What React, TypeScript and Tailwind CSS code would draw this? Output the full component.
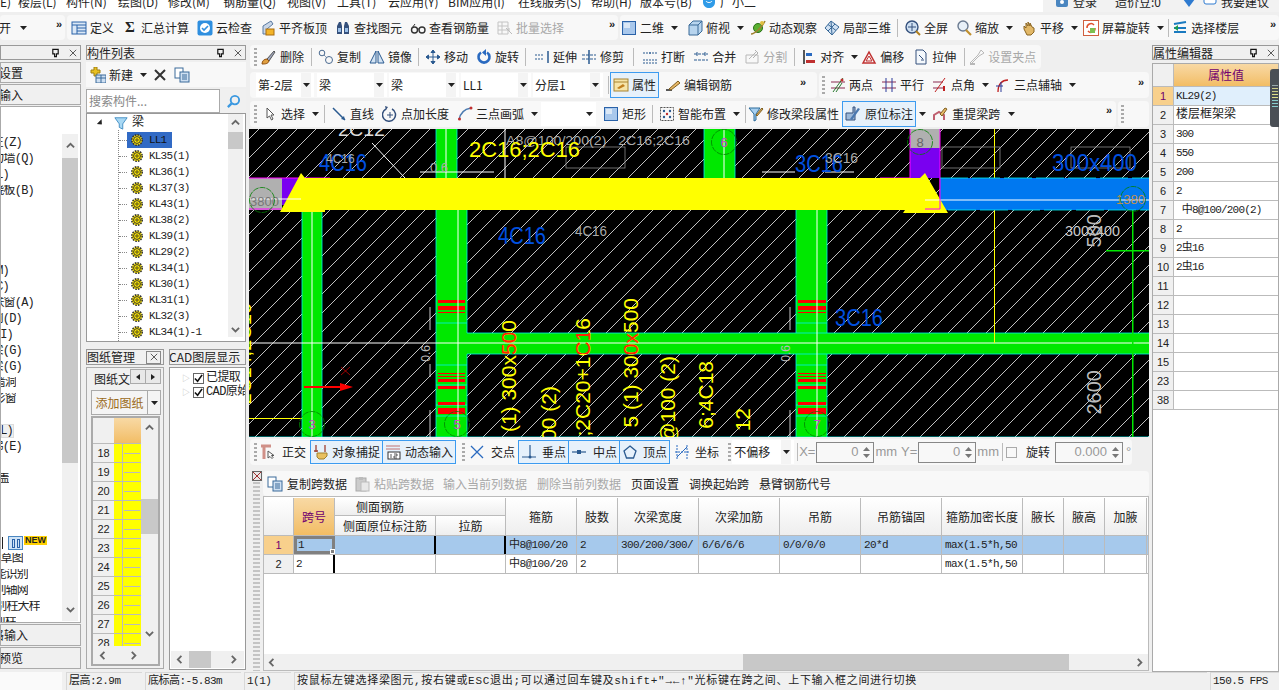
import React from "react";

const SANS = "font-['Noto_Sans_CJK_SC','Liberation_Sans',sans-serif]";
const MONO = "font-['Liberation_Mono','Noto_Sans_CJK_SC',monospace]";

const Ic = ({ children, w = 16 }: { children: React.ReactNode; w?: number }) => (
  <svg viewBox="0 0 16 16" width={w} height={w} className="shrink-0" fill="none">{children}</svg>
);
const Caret = ({ className = "" }: { className?: string }) => (
  <svg viewBox="0 0 7 4" width="7" height="4" className={"shrink-0 " + className}><path d="M0 0h7L3.5 4z" fill="#222" /></svg>
);
const More = ({ className = "" }: { className?: string }) => (
  <span className={"text-[11px] leading-none font-bold text-[#222] font-['Liberation_Sans',sans-serif] " + className}>»</span>
);
const Grip = ({ className = "" }: { className?: string }) => (
  <span className={"w-[3px] h-[18px] shrink-0 bg-[repeating-linear-gradient(to_bottom,#aaa_0,#aaa_2px,transparent_2px,transparent_4px)] " + className} />
);
const Sep = ({ className = "" }: { className?: string }) => <span className={"w-px h-[18px] bg-[#bbb] shrink-0 " + className} />;

const T = ({ icon, label, gray, caret, active, className = "" }: { icon?: React.ReactNode; label?: string; gray?: boolean; caret?: boolean; active?: boolean; className?: string }) => (
  <div className={"flex items-center gap-[3px] whitespace-nowrap shrink-0 h-full " + (gray ? "text-[#a8a8a8] " : "text-[#222] ") + (active ? "border border-[#3c9bf0] bg-[#e6f1fb] px-[2px] " : "") + className}>
    {icon}
    {label && <span className="leading-none">{label}</span>}
    {caret && <Caret className="ml-[4px]" />}
  </div>
);

const I = {
  def: <Ic><rect x="1" y="2" width="14" height="12" fill="#dbe8f6" stroke="#2a62a8" /><path d="M1 5h14M6 5v9M6 8h9M6 11h9" stroke="#2a62a8" /></Ic>,
  sigma: <span className="w-[16px] text-center font-bold text-[15px] leading-none font-['Liberation_Serif',serif]">Σ</span>,
  cloud: <Ic><rect x="0.5" y="0.5" width="15" height="15" rx="2" fill="#2f8fdf" /><circle cx="8" cy="8" r="5" fill="#fff" /><path d="M5 8l2 2 4-4" stroke="#2f8fdf" strokeWidth="1.6" /></Ic>,
  flat: <Ic><path d="M3 14V6l8-5 2 3-6 5v5z" fill="#c9d6e8" stroke="#5a7aa0" /><rect x="6" y="9" width="8" height="6" fill="#f3b428" stroke="#a86c10" /></Ic>,
  binoc: <Ic><path d="M2 14V6l2-4h2l1 4v8zM9 14V6l1-4h2l2 4v8z" fill="#35507c" /><rect x="3" y="8" width="3" height="4" fill="#9cc0e8" /><rect x="10" y="8" width="3" height="4" fill="#9cc0e8" /></Ic>,
  glasses: <Ic><circle cx="4.5" cy="10" r="3" stroke="#333" strokeWidth="1.4" /><circle cx="12" cy="10" r="3" stroke="#333" strokeWidth="1.4" /><path d="M7 9l2 0M2 8l3-4" stroke="#333" /></Ic>,
  batch: <Ic><path d="M1 2h10v12H1zM1 6h10M1 10h10M5 2v12" stroke="#c4c4c4" /><path d="M9 8l6 6M12 8v3" stroke="#bbb" /></Ic>,
  rect: <Ic><rect x="1.5" y="1.5" width="13" height="13" fill="#a9c8ec" stroke="#2a62a8" /><rect x="3" y="3" width="6" height="5" fill="#dbe8f6" /></Ic>,
  cube: <Ic><path d="M2 5l4-4h9v10l-4 4H2z" fill="#b7d4ee" stroke="#3a6a98" /><path d="M2 5h9v10M11 5l4-4" stroke="#3a6a98" /></Ic>,
  orbit: <Ic><circle cx="8" cy="8" r="4.5" fill="#5ab030" stroke="#2a7018" /><path d="M1 14c4 0 11-7 14-13" stroke="#a08030" strokeWidth="1.6" /><circle cx="12" cy="3" r="2" fill="#e0c040" /></Ic>,
  wire: <Ic><path d="M1 8l6-7 8 6-7 8z" fill="#cfe0f2" stroke="#3a6a98" /><path d="M4 4.5l8 6M7 1l1 14M11 4L4 11" stroke="#3a6a98" /></Ic>,
  full: <Ic><circle cx="7" cy="7" r="6" fill="#cfe0f2" stroke="#34507c" strokeWidth="1.4" /><path d="M7 3v8M3 7h8" stroke="#34507c" /><path d="M11 11l4 4" stroke="#b08020" strokeWidth="2" /></Ic>,
  mag: <Ic><circle cx="7" cy="6" r="5" fill="#e8f0f8" stroke="#6a7a90" strokeWidth="1.4" /><path d="M10 10l5 5" stroke="#c09030" strokeWidth="2.2" /></Ic>,
  hand: <Ic><path d="M3 9V6l2 2V3l2 3V2l2 4V3l2 4 2 1v4l-3 3H6z" fill="#e2b868" stroke="#8a6420" /></Ic>,
  rot: <Ic><rect x="0.5" y="0.5" width="15" height="15" fill="#fff" stroke="#d06040" /><path d="M4 8a4 4 0 017-3M12 8a4 4 0 01-7 3" stroke="#e0502c" strokeWidth="1.5" /><rect x="7" y="8" width="5" height="5" fill="#7cc050" /></Ic>,
  layers: <Ic><path d="M2 4l12-2M2 8h12M2 12h12" stroke="#1a7ac0" strokeWidth="2" /><path d="M2 8l4-3v6z" fill="#1a9a50" /></Ic>,
  brush: <Ic><path d="M7 10l7-8 1 1-6 9z" fill="#a0a8c0" stroke="#555" /><path d="M2 15c0-3 2-5 5-5l2 2c-1 3-4 3-7 3z" fill="#e0a040" stroke="#905010" /></Ic>,
  copy: <Ic><circle cx="4" cy="4" r="2.8" stroke="#4a6a90" /><circle cx="11" cy="11" r="3.5" stroke="#4a6a90" /><path d="M6 6l3 3" stroke="#4a6a90" strokeDasharray="1 1" /></Ic>,
  mirror: <Ic><path d="M7 2L1 14h6zM9 2l6 12H9z" fill="#d4e4f4" stroke="#2a5a90" /></Ic>,
  move: <Ic><path d="M8 1v14M1 8h14M8 1L6 3.5h4zM8 15l-2-2.500h4zM1 8l2.500-2v4zM15 8l-2.500-2v4z" fill="#2a5a90" stroke="#2a5a90" /></Ic>,
  rotate: <Ic><path d="M11 3.500A5.500 5.500 0 1 1 5 3.500" stroke="#2a6ac0" strokeWidth="2.600" /><path d="M9 0v7l4-3.500z" fill="#2a6ac0" transform="rotate(180 9.500 3.500)" /></Ic>,
  extend: <Ic><path d="M1 6h9M1 10h9" stroke="#2a5a90" strokeDasharray="2 1" /><path d="M14 2v12" stroke="#2a5a90" strokeWidth="1.500" /></Ic>,
  trim: <Ic><path d="M1 6h14M1 10h14" stroke="#2a5a90" strokeDasharray="3 1" /><path d="M8 1v14" stroke="#2a5a90" strokeWidth="1.500" /></Ic>,
  brk: <Ic><path d="M1 4h5M10 4h5M1 11h14M1 14h14" stroke="#2a5a90" strokeDasharray="2 1" /><circle cx="8" cy="4" r="1" fill="#2a5a90" /></Ic>,
  merge: <Ic><path d="M1 5h14M1 11h14" stroke="#2a5a90" strokeDasharray="3 1" /><path d="M4 3v4M12 3v4" stroke="#2a5a90" /></Ic>,
  split: <Ic><path d="M2 14V6h12v8zM5 10l8-8" stroke="#b8b8b8" /><path d="M11 1l3 3-5 5" stroke="#b0b0b0" /></Ic>,
  align: <Ic><path d="M3 1v14" stroke="#222" strokeWidth="1.500" /><path d="M5 11h9v3H5z" fill="#c03030" /><path d="M5 4h6v3H5z" fill="#2a6ac0" /></Ic>,
  offset: <Ic><path d="M2 14L8 3l6 11z" stroke="#c03030" strokeWidth="1.500" /><path d="M5 12l3-5 3 5z" stroke="#c03030" /></Ic>,
  stretch: <Ic><path d="M3 1h7l3 3v11H3z" stroke="#34507c" fill="#f4f8fc" /><path d="M6 6l4 4M8 11h3" stroke="#34507c" /></Ic>,
  grips: <Ic><path d="M1 14l8-8 3-5 3 3-5 3-8 8" stroke="#b8b8b8" /><path d="M1 15h5" stroke="#b8b8b8" strokeWidth="2" /></Ic>,
  attr: <Ic><rect x="1" y="2" width="14" height="12" fill="#f6e4a8" stroke="#a88430" /><path d="M1 5h14" stroke="#a88430" /><path d="M4 11l6-4 2 2-6 3z" fill="#c08020" /></Ic>,
  pen: <Ic><path d="M1 13h6" stroke="#222" strokeWidth="1.500" /><path d="M4 12l9-8 2 2-9 7z" fill="#e8b868" stroke="#806020" /></Ic>,
  two: <Ic><path d="M1 5h14M1 11h14" stroke="#8a2a50" /><path d="M3 15L13 1M6 15L12 6" stroke="#2a7a30" /><circle cx="12" cy="3" r="1.500" fill="#c03030" /></Ic>,
  par: <Ic><path d="M1 5h14M1 11h14" stroke="#8a2a50" /><path d="M5 1v14M11 1v14" stroke="#2a3a9a" /></Ic>,
  angle: <Ic><path d="M1 5h10M1 11h10" stroke="#8a2a50" /><path d="M3 15L13 1" stroke="#c02020" /><path d="M12 9v5" stroke="#c02020" strokeWidth="2" /></Ic>,
  arcAxis: <Ic><path d="M3 15c0-8 4-12 10-12" stroke="#c02020" strokeWidth="1.300" /><path d="M1 9h7M6 5v10" stroke="#2a3a9a" /></Ic>,
  cursor: <Ic><path d="M5 2v10l2.500-2 2 4 1.500-1-2-4h3z" fill="#fff" stroke="#555" /></Ic>,
  line: <Ic><path d="M2 2l12 12" stroke="#2a5a90" strokeWidth="1.500" /><path d="M14 14l-4-1 3-3z" fill="#2a5a90" /></Ic>,
  ptlen: <Ic><path d="M4 3a6.500 6.500 0 1 0 6 0" stroke="#34507c" strokeWidth="1.500" /><path d="M8 6v6M5 9h6" stroke="#34507c" /><path d="M3 0l3 1-2 3z" fill="#34507c" /></Ic>,
  arc: <Ic><path d="M2 14C3 7 8 3 14 2" stroke="#4a7ab0" strokeWidth="1.500" /><circle cx="2.500" cy="13" r="1.500" fill="#c03030" /><circle cx="14" cy="2" r="1.500" fill="#c03030" /></Ic>,
  smart: <Ic><rect x="1.500" y="1.500" width="13" height="13" stroke="#555" strokeDasharray="2 1" /><circle cx="5" cy="5" r="1.200" fill="#2a5a90" /><circle cx="11" cy="5" r="1.200" fill="#2a5a90" /><circle cx="8" cy="8" r="1.200" fill="#c03030" /><circle cx="5" cy="11" r="1.200" fill="#2a5a90" /><circle cx="11" cy="11" r="1.200" fill="#2a5a90" /></Ic>,
  filter: <Ic><path d="M1 2h11L8 8v6l-2 1V8z" fill="#a8d0f0" stroke="#2a6a9a" /><path d="M8 9l6-7 1 1-6 7z" fill="#e0b060" stroke="#806020" /></Ic>,
  mark: <Ic><path d="M1 14V7h7V1h2v13z" fill="#9cb8d8" stroke="#34507c" /><path d="M5 13l8-11 2 1-8 11z" fill="#4a78b0" /></Ic>,
  remark: <Ic><path d="M2 14V9l5-3 5 3v5" stroke="#c06070" strokeWidth="2" /><path d="M8 8l5-6 2 1-5 7z" fill="#e8b868" stroke="#806020" /></Ic>,
  ortho: <Ic><path d="M1 2h10M4 2v13" stroke="#d09088" strokeWidth="3" /><path d="M8 7v7l2-1.500 2 2 1-1-1.500-2H14z" fill="#fff" stroke="#555" /></Ic>,
  snapObj: <Ic><path d="M1 7h4M3 1v7" stroke="#a04030" strokeWidth="1.300" /><path d="M12 1v7" stroke="#a04030" strokeWidth="1.300" /><path d="M4 13V9h10v3l-3 3H6z" fill="#e8c060" stroke="#a08030" /></Ic>,
  dyn: <Ic><path d="M1 2h14M1 5h14" stroke="#c07070" /><rect x="3" y="8" width="12" height="7" fill="#fff" stroke="#333" /><path d="M6 10v4M9 10h3v2H9v2h3" stroke="#333" strokeWidth="0.800" /></Ic>,
  cross: <Ic><path d="M2 2l12 12M14 2L2 14" stroke="#2a6ac0" strokeWidth="1.300" /></Ic>,
  perp: <Ic><path d="M1 13h14M9 1v12" stroke="#2a5a90" strokeWidth="1.200" /><circle cx="9" cy="13" r="1.500" fill="#2a5a90" /></Ic>,
  mid: <Ic><path d="M1 8h14" stroke="#2a5a90" strokeWidth="1.200" /><rect x="6" y="6" width="4" height="4" fill="#2a5a90" /></Ic>,
  vert: <Ic><path d="M8 2l6 5-2.500 7h-7L2 7z" stroke="#2a5a90" strokeWidth="1.300" fill="#e6f1fb" /></Ic>,
  coord: <Ic><path d="M3 1v14M13 1v14M1 8h14" stroke="#2a6ac0" strokeDasharray="2 1" /><path d="M3 13L13 3" stroke="#2a6ac0" /></Ic>,
  tcopy: <Ic><rect x="1" y="1" width="8" height="10" fill="#fff" stroke="#3a6a9a" /><rect x="6" y="5" width="9" height="10" fill="#cfe0f2" stroke="#3a6a9a" /><path d="M8 8h5M8 10h5M8 12h5" stroke="#3a6a9a" /></Ic>,
  tpaste: <Ic><rect x="2" y="2" width="10" height="13" fill="#ccc" stroke="#aaa" /><rect x="5" y="1" width="4" height="3" fill="#bbb" /><rect x="7" y="6" width="8" height="9" fill="#e8e8e8" stroke="#bbb" /></Ic>,
  tnew: <Ic><path d="M4 0h3v3h3v3H7v3H4V6H1V3h3z" fill="#e8c020" stroke="#a08010" /><rect x="6" y="8" width="10" height="8" fill="#cfe0f2" stroke="#3a6a9a" /><path d="M6 11h10M11 8v8" stroke="#3a6a9a" /></Ic>,
};

const Gear = () => (
  <svg viewBox="0 0 12 12" width="12" height="12" className="shrink-0">
    <circle cx="6" cy="6" r="5.200" fill="#ffe800" stroke="#333" strokeWidth="1.600" strokeDasharray="1.600 1.100" />
    <circle cx="6" cy="6" r="3.400" fill="#ffe800" stroke="#333" />
    <circle cx="6" cy="6" r="1.200" fill="#ffe800" stroke="#222" strokeWidth="0.800" />
  </svg>
);

const Chev = ({ d, className = "" }: { d: "u" | "d" | "l" | "r"; className?: string }) => {
  const p = { u: "M1 6l4-4 4 4", d: "M1 2l4 4 4-4", l: "M6 1L2 5l4 4", r: "M2 1l4 4-4 4" }[d];
  return <svg viewBox="0 0 10 10" width="9" height="9" className={"shrink-0 " + className}><path d={p} fill="none" stroke="#666" strokeWidth="2" /></svg>;
};

const PanelHead = ({ title, className = "" }: { title: string; className?: string }) => (
  <div className={"h-[15px] border border-[#999] bg-[#f0f0f0] flex items-center text-[12px] leading-none text-[#222] overflow-hidden " + className}>
    <span className="grow whitespace-nowrap overflow-hidden">{title}</span>
    <svg viewBox="0 0 10 10" width="9" height="10" className="mr-[9px] shrink-0"><path d="M2 1h6v5H6v3H4V6H2z" fill="none" stroke="#111" strokeWidth="1.300" /></svg>
    <svg viewBox="0 0 10 10" width="8" height="8" className="mr-[3px] shrink-0"><path d="M1 1l8 8M9 1l-8 8" stroke="#333" /></svg>
  </div>
);

const Menu = () => {
  const items: [string, string][] = [
    ["E)", "w-[18px]"], ["楼层(L)", "w-[48px]"], ["构件(N)", "w-[52px]"], ["绘图(D)", "w-[50px]"], ["修改(M)", "w-[55px]"], ["钢筋量(Q)", "w-[64px]"], ["视图(V)", "w-[50px]"], ["工具(T)", "w-[51px]"], ["云应用(Y)", "w-[60px]"], ["BIM应用(I)", "w-[70px]"], ["在线服务(S)", "w-[73px]"], ["帮助(H)", "w-[49px]"], ["版本号(B)", "w-[62px]"],
  ];
  return (
    <div className="h-[12px] overflow-hidden flex text-[12px] leading-none text-[#222] bg-white">
      <div className="flex -mt-[4px] grow">
        {items.map(([t, w]) => <span key={t} className={"whitespace-nowrap shrink-0 " + w}>{t}</span>)}
        <svg viewBox="0 0 14 14" width="14" height="14" className="shrink-0 mt-[-1px]"><path d="M1 0h12v7c0 4-3 6-6 6s-6-2-6-6z" fill="#2f9be8" /><path d="M4 6c1 2 5 2 6 0" stroke="#fff" fill="none" /></svg>
        <span className="ml-[4px] whitespace-nowrap">广小二</span>
      </div>
      <div className="w-[236px] h-full bg-[#f2f2f2] flex relative overflow-hidden shrink-0">
        <div className="flex items-start -mt-[4px] pl-[12px]">
          <svg viewBox="0 0 14 14" width="14" height="14" className="mr-[4px] -mt-[1px] shrink-0"><rect x="1" y="0" width="12" height="12" rx="2" fill="#4a86c0" /><circle cx="7" cy="7" r="2" fill="#fff" /></svg>
          <span className="whitespace-nowrap">登录</span>
          <span className="ml-[18px] whitespace-nowrap">造价豆:0</span>
          <svg viewBox="0 0 12 8" width="12" height="8" className="ml-[22px] mt-[3px] shrink-0"><path d="M0 0h12L6 8z" fill="#2f7bd0" /></svg>
          <svg viewBox="0 0 14 14" width="14" height="14" className="ml-[8px] -mt-[1px] shrink-0"><rect x="1" y="0" width="12" height="9" rx="2" fill="#fff" stroke="#2f7bd0" /></svg>
          <span className="ml-[4px] whitespace-nowrap">我要建议</span>
        </div>
      </div>
    </div>
  );
};

const Row1 = () => (
  <div className="mt-[3px] h-[25px] flex gap-[2px] text-[12px]">
    <div className="w-[65px] bg-[#f8f8f8] rounded-sm flex items-center relative overflow-hidden">
      <span className="-ml-[13px] text-[#222] whitespace-nowrap">打开</span><Caret className="ml-[9px]" /><More className="absolute right-[3px] top-[4px]" />
    </div>
    <div className="w-[551px] bg-[#f8f8f8] rounded-sm flex items-center pl-[4px] gap-[8px] relative">
      <T icon={I.def} label="定义" /><T icon={I.sigma} label="汇总计算" /><T icon={I.cloud} label="云检查" /><T icon={I.flat} label="平齐板顶" /><T icon={I.binoc} label="查找图元" /><T icon={I.glasses} label="查看钢筋量" /><T icon={I.batch} label="批量选择" gray />
      <More className="absolute right-[3px] top-[4px]" />
    </div>
    <div className="grow bg-[#f8f8f8] rounded-sm flex items-center pl-[1px] relative">
      <T icon={I.rect} label="二维" caret /><T icon={I.cube} label="俯视" caret className="ml-[9px]" /><T icon={I.orbit} label="动态观察" className="ml-[6px]" /><T icon={I.wire} label="局部三维" className="ml-[7px]" />
      <Sep className="ml-[6px]" /><T icon={I.full} label="全屏" className="ml-[7px]" /><T icon={I.mag} label="缩放" caret className="ml-[8px]" /><T icon={I.hand} label="平移" caret className="ml-[8px]" /><T icon={I.rot} label="屏幕旋转" caret className="ml-[5px]" />
      <Sep className="ml-[4px]" /><T icon={I.layers} label="选择楼层" className="ml-[3px]" />
      <More className="absolute right-[3px] top-[4px]" />
    </div>
  </div>
);

const leftRows: [string, string][] = [
  ["柱(Z)", "w-[21px]"], ["剪力墙(Q)", "w-[33px]"], ["梁(L)", "w-[8px]"], ["现浇板(B)", "w-[33px]"], ["", ""], ["", ""], ["", ""], ["", ""],
  ["门(M)", "w-[8px]"], ["窗(C)", "w-[8px]"], ["门联窗(A)", "w-[33px]"], ["墙洞(D)", "w-[21px]"], ["壁龛(I)", "w-[12px]"], ["连梁(G)", "w-[21px]"], ["圈梁(G)", "w-[21px]"], ["墙洞", "w-[15px]"], ["带形窗", "w-[15px]"],
  ["", ""], ["(L)", "w-[13px]"], ["楼梯(E)", "w-[21px]"], ["", ""], ["顶盖", "w-[8px]"], ["", ""], ["", ""], ["", ""], ["NEW", ""], ["绘草图", "w-[22px]"], ["智能识别", "w-[27px]"], ["识别轴网", "w-[27px]"], ["识别柱大样", "w-[39px]"], ["识别柱", "w-[15px]"],
];

const LeftPanel = () => (
  <div className="w-[81px] shrink-0 flex flex-col text-[12px] text-[#222]">
    <PanelHead title="" />
    <div className="mt-[2px] h-[21px] border border-[#aaa] bg-[#f0f0f0] flex items-center overflow-hidden"><span className="-ml-[26px] whitespace-nowrap leading-none">计算设置</span></div>
    <div className="mt-[1px] h-[21px] border border-[#aaa] bg-[#f0f0f0] flex items-center overflow-hidden"><span className="-ml-[26px] whitespace-nowrap leading-none">绘图输入</span></div>
    <div className="mt-[1px] h-[517px] border border-[#aaa] bg-white flex relative overflow-hidden">
      <div className="grow overflow-hidden pt-[28px]">
        {leftRows.map(([t, w], i) => (
          <div key={i} className={"h-[16px] flex items-center whitespace-nowrap leading-none tracking-[-0.8px] " + MONO}>
            {t === "NEW" ? (
              <>
                <span className="ml-[1px] mr-[5px] w-px h-[12px] bg-[#222]" />
                <span className="w-[15px] h-[14px] border border-[#4a86c0] bg-[#cfe3f6] flex items-center justify-center gap-[2px] shrink-0"><i className="w-[3px] h-[9px] border border-[#2a62a8]" /><i className="w-[3px] h-[9px] border border-[#2a62a8]" /></span>
                <span className="ml-[1px] -mt-[6px] text-[9px] tracking-normal font-bold text-[#222] bg-[#ffd000] px-[1px] font-['Liberation_Sans',sans-serif]">NEW</span>
              </>
            ) : t === "(L)" ? (
              <span className={"h-[14px] bg-[#f0f0f0] border border-[#ddd] flex justify-end items-center overflow-hidden " + w}><span>L)</span></span>
            ) : (
              <span className={"flex justify-end overflow-hidden " + w}><span className="shrink-0">{t}</span></span>
            )}
          </div>
        ))}
      </div>
      <div className="absolute right-[2px] top-[27px] bottom-[1px] w-[16px] bg-[#f0f0f0] flex flex-col">
        <div className="h-[24px] flex justify-center items-center"><Chev d="u" /></div>
        <div className="h-[305px] bg-[#c8c8c8]" />
        <div className="grow flex justify-center items-end pb-[6px]"><Chev d="d" /></div>
      </div>
    </div>
    <div className="mt-[1px] h-[22px] border border-[#aaa] bg-[#f0f0f0] flex items-center overflow-hidden"><span className="-ml-[21px] whitespace-nowrap leading-none">表格输入</span></div>
    <div className="mt-[1px] h-[22px] border border-[#aaa] bg-[#f0f0f0] flex items-center overflow-hidden"><span className="-ml-[26px] whitespace-nowrap leading-none">报表预览</span></div>
  </div>
);

const treeItems = ["LL1", "KL35(1)", "KL36(1)", "KL37(3)", "KL43(1)", "KL38(2)", "KL39(1)", "KL29(2)", "KL34(1)", "KL30(1)", "KL31(1)", "KL32(3)", "KL34(1)-1"];
const nums = ["18", "19", "20", "21", "22", "23", "24", "25", "26", "27", "28"];

const Col2 = () => (
  <div className="w-[161px] shrink-0 flex flex-col text-[12px] text-[#222]">
    <PanelHead title="构件列表" className="ml-[1px]" />
    <div className="ml-[1px] mt-[2px] h-[25px] bg-[#f8f8f8] flex items-center pl-[4px]">
      <T icon={I.tnew} label="新建" caret />
      <svg viewBox="0 0 14 14" width="14" height="14" className="ml-[6px] shrink-0"><path d="M2 2l10 10M12 2L2 12" stroke="#333" strokeWidth="2" /></svg>
      <span className="ml-[7px]">{I.tcopy}</span>
    </div>
    <div className="ml-[1px] mt-[2px] h-[24px] flex bg-[#f0f0f0]">
      <div className="w-[134px] border border-[#aaa] bg-white flex items-center pl-[2px] text-[#888] leading-none">搜索构件...</div>
      <div className="grow flex items-center justify-center"><svg viewBox="0 0 16 16" width="15" height="15"><circle cx="9.500" cy="6.500" r="4.500" fill="none" stroke="#3a98e0" strokeWidth="2" /><path d="M6 10l-4 4" stroke="#3a98e0" strokeWidth="2.500" /></svg></div>
    </div>
    <div className={"ml-[1px] h-[229px] border border-[#999] bg-white relative overflow-hidden " + MONO}>
      <div className="h-[18px] flex items-center pl-[10px]">
        <Caret className="rotate-[-45deg]" />
        <span className="ml-[10px]">
          <svg viewBox="0 0 16 16" width="14" height="14"><path d="M1 2h14L10 9v6l-4-2V9z" fill="#a8d8f4" stroke="#3a88c0" /></svg>
        </span>
        <span className="ml-[4px] text-[12px] leading-none">梁</span>
      </div>
      <div className="absolute left-[31px] top-[16px] bottom-0 border-l border-dotted border-[#888]" />
      {treeItems.map((t, i) => (
        <div key={t + i} className="h-[16px] flex items-center pl-[32px]">
          <span className="w-[8px] border-t border-dotted border-[#888] shrink-0" />
          <span className={"flex items-center gap-[3px] h-[16px] pl-[4px] pr-[6px] " + (i === 0 ? "bg-[#316ac5]" : "")}>
            <Gear />
            <span className={"ml-[3px] text-[11px] tracking-[-0.8px] leading-none " + (i === 0 ? "text-[#111]" : "text-[#222]")}>{t}</span>
          </span>
        </div>
      ))}
      <div className="absolute right-[2px] top-0 bottom-[4px] w-[15px] bg-[#f0f0f0] flex flex-col items-center">
        <div className="h-[18px] flex items-center"><Chev d="u" /></div>
        <div className="w-full h-[17px] bg-[#c8c8c8]" />
        <div className="grow flex items-end pb-[2px]"><Chev d="d" /></div>
      </div>
    </div>
    <div className="mt-[7px] flex gap-[5px] ml-[1px]">
      <div className="w-[78px] flex flex-col">
        <div className="h-[16px] border border-[#999] bg-[#f0f0f0] flex items-center justify-between overflow-hidden leading-none">
          <span className="whitespace-nowrap">图纸管理</span>
          <span className="mr-[2px] w-[15px] h-[13px] border border-[#888] flex items-center justify-center"><svg viewBox="0 0 10 10" width="8" height="8"><path d="M1 1l8 8M9 1l-8 8" stroke="#333" /></svg></span>
        </div>
        <div className="mt-[2px] h-[302px] border border-[#aaa] bg-[#f0f0f0] flex flex-col px-[4px]">
          <div className="h-[22px] flex items-center relative">
            <span className="ml-[3px] leading-none whitespace-nowrap">图纸文</span>
            <div className="absolute right-[-2px] top-[1px] flex border border-[#aaa] bg-[#e8e8e8] h-[15px] w-[31px]">
              <span className="w-1/2 border-r border-[#aaa] flex items-center justify-center"><i className="border-y-[3px] border-r-[4px] border-y-transparent border-r-[#222]" /></span>
              <span className="w-1/2 flex items-center justify-center"><i className="border-y-[3px] border-l-[4px] border-y-transparent border-l-[#222]" /></span>
            </div>
          </div>
          <div className="h-[25px] w-[70px] border border-[#aaa] bg-[#f4f4f4] flex items-center shrink-0">
            <span className="grow text-center text-[12px] leading-none text-[#9a6a20]">添加图纸</span>
            <span className="w-[13px] h-full border-l border-[#aaa] flex items-center justify-center"><Caret /></span>
          </div>
          <div className="mt-[1px] h-[250px] w-[69px] border-2 border-[#aaa] bg-[#f0f0f0] overflow-hidden flex flex-col">
            <div className="flex h-[202px] overflow-hidden grow">
              <div className="w-[48px] shrink-0">
                <div className="flex h-[26px] border-b border-[#bbb]">
                  <div className="w-[21px] bg-[#f0f0f0]" />
                  <div className="grow bg-gradient-to-b from-[#f8d9a4] to-[#f2bd64]" />
                </div>
                {nums.map((n) => (
                  <div key={n} className="flex h-[19px] border-b border-[#bbb]">
                    <div className="w-[21px] bg-[#f0f0f0] flex items-center justify-center text-[11px] leading-none font-['Liberation_Sans',sans-serif]">{n}</div>
                    <div className="w-[9px] bg-[#ffff00] border-r border-[#bbb]" />
                    <div className="grow bg-[#ffff00] flex items-center"><span className="w-full mx-[1px] h-px bg-[#bbb]" /></div>
                  </div>
                ))}
              </div>
              <div className="grow flex flex-col items-center pt-[6px]">
                <Chev d="u" />
                <div className="mt-[66px] w-full h-[35px] bg-[#c8c8c8]" />
                <div className="mt-[96px]"><Chev d="d" /></div>
              </div>
            </div>
            <div className="h-[18px] flex items-center px-[6px] gap-[22px] shrink-0"><Chev d="l" /><Chev d="r" /></div>
          </div>
        </div>
      </div>
      <div className="w-[77px] flex flex-col">
        <div className="h-[16px] border border-[#999] bg-[#f0f0f0] flex items-center overflow-hidden leading-none"><span className="whitespace-nowrap -ml-[1px] text-[12px]">CAD图层显示</span></div>
        <div className="mt-[2px] h-[303px] border border-[#999] bg-white flex flex-col overflow-hidden">
          <div className="pl-[12px] pt-[3px] grow">
            {["已提取", "CAD原始"].map((t) => (
              <div key={t} className="h-[14px] flex items-center whitespace-nowrap leading-none">
                <span className="text-[#bbb] text-[8px] mr-[3px]">▷</span>
                <span className="w-[11px] h-[11px] border border-[#666] bg-white flex items-center justify-center mr-[2px] shrink-0"><svg viewBox="0 0 10 10" width="9" height="9"><path d="M1 5l3 3 5-7" fill="none" stroke="#111" strokeWidth="1.800" /></svg></span>
                <span className={MONO + " text-[12px] tracking-[-0.6px]"}>{t}</span>
              </div>
            ))}
          </div>
          <div className="h-[17px] bg-[#f0f0f0] mx-[1px] mb-[1px] flex items-center px-[5px]"><Chev d="l" /><div className="ml-[4px] w-[22px] h-full bg-[#c8c8c8]" /><Chev d="r" className="ml-auto" /></div>
        </div>
      </div>
    </div>
  </div>
);

const Row2 = () => (
  <div className="h-[24px] w-[791px] ml-[1px] bg-[#f8f8f8] flex items-center pl-[4px] text-[12px] rounded-sm">
    <Grip />
    <T icon={I.brush} label="删除" className="ml-[3px] gap-[4px]" /><Sep className="ml-[7px]" />
    <T icon={I.copy} label="复制" className="ml-[6px]" />
    <T icon={I.mirror} label="镜像" className="ml-[8px]" /><Sep className="ml-[6px]" />
    <T icon={I.move} label="移动" className="ml-[6px]" />
    <T icon={I.rotate} label="旋转" className="ml-[8px] gap-[3px]" /><Sep className="ml-[6px]" />
    <T icon={I.extend} label="延伸" className="ml-[8px]" />
    <T icon={I.trim} label="修剪" className="ml-[4px]" /><Sep className="ml-[9px]" />
    <T icon={I.brk} label="打断" className="ml-[8px]" />
    <T icon={I.merge} label="合并" className="ml-[8px]" />
    <T icon={I.split} label="分割" gray className="ml-[8px]" /><Sep className="ml-[7px]" />
    <T icon={I.align} label="对齐" caret className="ml-[6px] !gap-[3px]" />
    <T icon={I.offset} label="偏移" className="ml-[3px]" />
    <T icon={I.stretch} label="拉伸" className="ml-[9px]" /><Sep className="ml-[8px]" />
    <T icon={I.grips} label="设置夹点" gray className="ml-[4px]" />
  </div>
);

const Sel = ({ t, w }: { t: string; w: string }) => (
  <div className={"h-[24px] bg-white flex items-center justify-between pl-[2px] pr-[3px] shrink-0 " + w}>
    <span className="leading-none whitespace-nowrap">{t}</span>
    <span className="w-[10px] h-full bg-[#f4f4f4] flex items-center justify-center"><Caret /></span>
  </div>
);

const Row3 = () => (
  <div className="mt-[3px] h-[26px] flex gap-[2px] text-[12px] text-[#222] ml-[1px]">
    <div className="w-[567px] bg-[#f8f8f8] rounded-sm flex items-center pl-[6px] relative">
      <Sel t="第-2层" w="w-[58px]" /><Sel t="梁" w="w-[70px] ml-[3px]" /><Sel t="梁" w="w-[70px] ml-[2px]" /><Sel t="LL1" w="w-[70px] ml-[2px]" /><Sel t="分层1" w="w-[70px] ml-[2px]" />
      <Sep className="ml-[5px]" />
      <T icon={I.attr} label="属性" active className="ml-[1px] !h-[26px]" />
      <T icon={I.pen} label="编辑钢筋" className="ml-[6px]" />
      <More className="absolute right-[11px] top-[5px]" />
    </div>
    <div className="grow bg-[#f8f8f8] rounded-sm flex items-center pl-[3px] relative">
      <Grip />
      <T icon={I.two} label="两点" className="ml-[5px]" />
      <T icon={I.par} label="平行" className="ml-[8px]" />
      <T icon={I.angle} label="点角" caret className="ml-[8px]" />
      <T icon={I.arcAxis} label="三点辅轴" caret className="ml-[6px]" />
      <More className="absolute right-[5px] top-[5px]" />
    </div>
  </div>
);

const Row4 = () => (
  <div className="mt-[3px] h-[26px] flex gap-[2px] text-[12px] text-[#222] ml-[1px]">
    <div className="w-[866px] bg-[#f8f8f8] rounded-sm flex items-center pl-[4px] relative">
      <Grip />
      <T icon={I.cursor} label="选择" caret className="ml-[5px] gap-[1px]" /><Sep className="ml-[5px]" />
      <T icon={I.line} label="直线" className="ml-[6px]" />
      <T icon={I.ptlen} label="点加长度" className="ml-[8px] gap-[1px]" />
      <T icon={I.arc} label="三点画弧" caret className="ml-[8px]" />
      <span className="ml-[3px] w-[55px] h-[24px] bg-white flex items-center justify-end pr-[3px]"><Caret /></span>
      <T icon={I.rect} label="矩形" className="ml-[7px]" /><Sep className="ml-[6px]" />
      <T icon={I.smart} label="智能布置" caret className="ml-[6px] !gap-[3px]" /><Sep className="ml-[5px]" />
      <T icon={I.filter} label="修改梁段属性" className="ml-[2px] gap-[0px]" />
      <T icon={I.mark} label="原位标注" active className="ml-[3px] !h-[26px] gap-[4px]" />
      <Caret className="ml-[3px]" />
      <T icon={I.remark} label="重提梁跨" caret className="ml-[6px] gap-[4px]" />
      <More className="absolute right-[4px] top-[4px]" />
    </div>
    <div className="grow bg-[#f8f8f8] rounded-sm flex items-center pl-[3px]"><Grip /></div>
  </div>
);

const Canvas = () => {
  const Y = "#ffff00";
  const G = "#00e800";
  const C = "#00f0f0";
  const vt = (x: number, y: number, t: string, size = 21, fill = Y, key?: string) => (
    <text key={key} x={x} y={y} transform={`rotate(-90 ${x} ${y})`} textAnchor="end" fontSize={size} fill={fill} fontFamily="'Liberation Sans',sans-serif">{t}</text>
  );
  const vtexts = (fill: string) => [
    vt(516, 320, "(1)  300x500", 21, fill, "a"), vt(556, 386, "00 (2)", 21, fill, "b"), vt(590, 318, ";2C20+1C16", 21, fill, "c"), vt(638, 298, "5 (1)  300x500", 21, fill, "d"), vt(675, 356, "@100 (2)", 21, fill, "e"), vt(713, 361, "6;4C18", 21, fill, "f"), vt(750, 408, "12", 21, fill, "g"),
  ];
  const stripes = (x: number, w: number) => [300, 306, 309, 312, 373, 376, 379, 386, 402, 408, 411].map((y, i) => <rect key={y + "s" + x + i} x={x} y={y} width={w} height={i === 2 || i === 3 || i === 4 || i === 5 ? 1 : 3} fill="#ff0000" />);
  const circle = (x: number, y: number, t: string, fill = "#d040d0", key?: string) => (
    <g key={key}>
      <circle cx={x} cy={y} r="12.500" fill="none" stroke="#008000" strokeWidth="0.800" strokeDasharray="6 1" />
      <text x={x} y={y + 5} fontSize="13" textAnchor="middle" fill={fill} fontFamily="'Liberation Sans',sans-serif">{t}</text>
    </g>
  );
  return (
    <svg viewBox="249 129 900 308" width="900" height="308" className="block mt-[2px] shrink-0 bg-black">
      <defs>
        <pattern id="hatch" patternUnits="userSpaceOnUse" width="19" height="19" x="8" y="0">
          <path d="M-1 20L20 -1" stroke="#c0c0c0" strokeWidth="1" shapeRendering="crispEdges" />
        </pattern>
        <clipPath id="beam"><rect x="467" y="333" width="682" height="21" /></clipPath>
      </defs>
      <rect x="249" y="129" width="900" height="308" fill="#000" />
      <rect x="249" y="129" width="900" height="308" fill="url(#hatch)" />

      <rect x="302" y="210" width="20" height="227" fill={G} />
      <rect x="436" y="129" width="21" height="49" fill={G} />
      <rect x="436" y="210" width="31" height="227" fill={G} />
      <rect x="704" y="129" width="31" height="49" fill={G} />
      <rect x="796" y="210" width="31" height="227" fill={G} />
      <rect x="467" y="333" width="682" height="21" fill={G} />
      <g stroke={C} strokeWidth="0.800">
        <path d="M302 210V437M322 210V437M436 129V178M457 129V178M436 210V437M467 210V333M467 354V437M704 129V178M735 129V178M796 210V333M796 354V437M827 210V333M827 354V437" fill="none" />
        <path d="M467 333H1149M467 354H1149M249 437H1149" />
        <path d="M436 323H467M436 365H467M436 385H467M436 405H467M436 416H467M796 323H827M796 365H827M796 385H827M796 405H827M796 416H827" />
      </g>
      {stripes(438, 27)}
      {stripes(798, 28)}
      <g stroke="#fff" strokeWidth="1">
        <path d="M312 210V437M446 129V178M458 210V437M724 129V178M817 210V437M249 343H1149" />
        <path d="M420 172H494M762 172H795M825 172H854M505 129V178M372 143L405 178" />
        <path d="M430 307V330M430 364V377M430 410V437M790 307V330M790 410V437" strokeWidth="0.800" />
      </g>
      <rect x="994" y="129" width="1" height="214" fill={Y} />
      <rect x="1132" y="200" width="1.500" height="237" fill="#00e800" />
      <rect x="1106" y="250" width="43" height="1.500" fill="#00e800" />
      <rect x="1106" y="200" width="43" height="1" fill="#00e800" />

      <rect x="910" y="129" width="30" height="19" fill="#b0b0b0" />
      <rect x="910" y="148" width="30" height="30" fill="#7a00f0" />
      <path d="M910 129V178H880M940 129V209H925" fill="none" stroke="#ff00ff" strokeWidth="1" />
      <rect x="249" y="178" width="33" height="32" fill="#b0b0b0" />
      <path d="M282 178H300L284 205H282z" fill="#7a00f0" />
      <path d="M249 178H330M249 209H300" stroke="#ff00ff" strokeWidth="1" />
      <rect x="940" y="178" width="209" height="32" fill="#0078f0" />
      <path d="M940 178H1149M948 210H1149" stroke={C} strokeWidth="0.800" strokeDasharray="28 4" />

      <path d="M301 173L305 178H920L925 173L948 213H903L905 210H325L325 212H280L301 173z" fill={Y} />
      <path d="M925 200H1149" stroke="#fff" strokeWidth="1.200" />
      <path d="M249 199H301" stroke="#fff" strokeWidth="1" />
      <path d="M925 209H940V178" fill="none" stroke="#ff00ff" strokeWidth="1" />

      <g fill="none" stroke="#888" strokeWidth="0.800">
        <rect x="566" y="147" width="59" height="21" />
        <rect x="942" y="147" width="58" height="21" />
        <rect x="1071" y="147" width="59" height="21" />
      </g>

      <g fontFamily="'Liberation Sans',sans-serif">
        <text x="338" y="136" fontSize="18" fill="#ddd" textLength="47" lengthAdjust="spacingAndGlyphs">2C12</text>
        <text x="506" y="145" fontSize="13" fill="#aaa" xmlSpace="preserve" textLength="184" lengthAdjust="spacingAndGlyphs">A8@100/200(2)   2C16;2C16</text>
        <text x="469" y="157" fontSize="22" fill={Y} textLength="111" lengthAdjust="spacingAndGlyphs">2C16;2C16</text>
        <text x="319" y="171" fontSize="24" fill="#0050e0" textLength="48" lengthAdjust="spacingAndGlyphs">4C16</text>
        <text x="326" y="163" fontSize="12" fill="#aaa">4C16</text>
        <text x="430" y="172" fontSize="13" fill="#aaa">0.6</text>
        <text x="498" y="244" fontSize="24" fill="#0050e0" textLength="48" lengthAdjust="spacingAndGlyphs">4C16</text>
        <text x="575" y="236" fontSize="14" fill="#aaa" textLength="32" lengthAdjust="spacingAndGlyphs">4C16</text>
        <text x="795" y="172" fontSize="24" fill="#0050e0" textLength="48" lengthAdjust="spacingAndGlyphs">3C16</text>
        <text x="825" y="163" fontSize="14" fill="#aaa" textLength="33" lengthAdjust="spacingAndGlyphs">3C16</text>
        <text x="1052" y="171" fontSize="24" fill="#0050e0" textLength="85" lengthAdjust="spacingAndGlyphs">300x400</text>
        <text x="1065" y="236" fontSize="14" fill="#ccc" textLength="55" lengthAdjust="spacingAndGlyphs">300x400</text>
        <text x="835" y="326" fontSize="24" fill="#0050e0" textLength="48" lengthAdjust="spacingAndGlyphs">3C16</text>
        <text x="250" y="206" fontSize="13" fill="#777">3800</text>
        <text x="1116" y="204" fontSize="13" fill="#c09050">1380</text>
        {vt(1101, 214, "500", 20, "#bbb")}
        {vt(1101, 370, "2600", 20, "#bbb")}
        {vt(430, 345, "0.6", 12, "#bbb")}
        {vt(790, 345, "0.6", 12, "#bbb")}
        {vt(251, 303, "2C14;2C16", 20, Y)}
        {vtexts(Y)}
        <g clipPath="url(#beam)">{vtexts("#ff2000")}</g>
      </g>

      <rect x="249" y="418" width="53" height="1" fill={Y} />
      {circle(262, 200, "", "#777", "c0")}
      {circle(1133, 199, "", "#777", "c1")}
      {circle(312, 424, "3", "#d040d0", "c2")}
      {circle(457, 424, "5", "#d040d0", "c3")}
      {circle(724, 142, "6", "#d040d0", "c4")}
      {circle(920, 142, "8", "#666", "c5")}
      {circle(817, 424, "7", "#d040d0", "c6")}

      <path d="M304 386H340V383L353 387L340 391V388H304z" fill="#ff0000" />
      <path d="M341 367L350 375M350 367L341 375" stroke="#ff0000" strokeWidth="0.600" />
    </svg>
  );
};

const Snap = () => (
  <div className="mt-[2px] h-[26px] w-[882px] ml-[1px] bg-[#f8f8f8] flex items-center pl-[4px] text-[12px] text-[#222] rounded-sm shrink-0">
    <Grip />
    <T icon={I.ortho} label="正交" className="ml-[3px] gap-[6px]" />
    <T icon={I.snapObj} label="对象捕捉" active className="ml-[4px] !h-[24px] gap-[3px]" />
    <T icon={I.dyn} label="动态输入" active className="!h-[24px] gap-[4px] -ml-px" />
    <Grip className="ml-[6px]" />
    <T icon={I.cross} label="交点" className="ml-[4px] gap-[6px]" />
    <T icon={I.perp} label="垂点" active className="ml-[3px] !h-[24px] gap-[5px]" />
    <T icon={I.mid} label="中点" active className="!h-[24px] gap-[6px] -ml-px" />
    <T icon={I.vert} label="顶点" active className="!h-[24px] gap-[5px] -ml-px" />
    <T icon={I.coord} label="坐标" className="ml-[4px] gap-[5px]" />
    <Grip className="ml-[9px]" />
    <Sel t="不偏移" w="w-[62px] ml-[1px]" />
    <Sep className="ml-[3px]" />
    <div className="flex items-center h-full ml-[1px] text-[13px] text-[#999] font-['Liberation_Sans',sans-serif]">
      <span>X=</span>
      <div className="ml-[1px] w-[58px] h-[21px] border border-[#888] bg-[#f8f8f8] flex items-center justify-end text-right pr-[3px]"><span className="mr-[5px]">0</span><span className="flex flex-col gap-[3px]"><Caret className="rotate-180 opacity-60" /><Caret className="opacity-60" /></span></div>
      <span className="ml-[1px]">mm</span><span className="ml-[4px]">Y=</span>
      <div className="ml-[1px] w-[58px] h-[21px] border border-[#888] bg-[#f8f8f8] flex items-center justify-end text-right pr-[3px]"><span className="mr-[5px]">0</span><span className="flex flex-col gap-[3px]"><Caret className="rotate-180 opacity-60" /><Caret className="opacity-60" /></span></div>
      <span className="ml-[1px]">mm</span>
      <Sep className="ml-[3px]" />
      <span className="ml-[3px] w-[11px] h-[11px] border border-[#aaa]" />
      <span className={"ml-[9px] text-[12px] text-[#222] " + SANS}>旋转</span>
      <div className="ml-[5px] w-[68px] h-[21px] border border-[#888] bg-[#f8f8f8] flex items-center justify-end pr-[3px]"><span className="mr-[5px]">0.000</span><span className="flex flex-col gap-[3px]"><Caret className="rotate-180 opacity-60" /><Caret className="opacity-60" /></span></div>
      <span className="ml-[3px]">°</span>
    </div>
  </div>
);

const COLS = "grid grid-cols-[30px_41px_101px_70px_71px_41px_81px_81px_81px_81px_81px_41px_41px_42px]";
const hc = "border-r border-[#bbb] bg-gradient-to-b from-white to-[#eeeeee] flex items-center justify-center text-[12px] leading-none text-[#222] whitespace-nowrap overflow-hidden";
const dc = "border-r border-[#bbb] flex items-center whitespace-nowrap overflow-hidden pl-[3px] text-[11px] leading-none text-[#222] tracking-[-0.6px] " + MONO;

const DataTable = () => {
  const row1 = ["中8@100/20", "2", "300/200/300/", "6/6/6/6", "0/0/0/0", "20*d", "max(1.5*h,50", "", "", ""];
  const row2 = ["中8@100/20", "2", "", "", "", "", "max(1.5*h,50", "", "", ""];
  return (
    <div className="mt-[6px] h-[200px] flex text-[12px] text-[#222]">
      <div className="w-[13px] shrink-0 relative ml-[1px] flex flex-col items-center">
        <svg viewBox="0 0 10 10" width="10" height="10" className="shrink-0"><rect x="0.500" y="0.500" width="9" height="9" fill="#e8e8e8" stroke="#666" /><path d="M1 1l8 8M9 1L1 9" stroke="#a03030" /></svg>
        <span className="mt-[1px] w-[7px] grow bg-[repeating-linear-gradient(to_bottom,#c4c4c4_0,#c4c4c4_2px,transparent_2px,transparent_4px)]" />
      </div>
      <div className="grow flex flex-col min-w-0">
        <div className="h-[25px] bg-[#f8f8f8] flex items-center pl-[4px] rounded-sm shrink-0">
          <T icon={I.tcopy} label="复制跨数据" className="gap-[4px]" />
          <T icon={I.tpaste} label="粘贴跨数据" gray className="ml-[7px] gap-[4px]" />
          <T label="输入当前列数据" gray className="ml-[9px]" />
          <T label="删除当前列数据" gray className="ml-[10px]" />
          <T label="页面设置" className="ml-[10px]" />
          <T label="调换起始跨" className="ml-[10px]" />
          <T label="悬臂钢筋代号" className="ml-[10px]" />
        </div>
        <div className="grow bg-white border border-[#bbb] flex flex-col overflow-hidden">
          <div className={COLS + " grid-rows-[18px_19px] border-b border-[#bbb] shrink-0 mt-[1px]"}>
            <div className={"row-span-2 " + hc} />
            <div className="row-span-2 bg-gradient-to-b from-[#f8d9a4] to-[#f2bd64] border-r border-[#bbb] flex items-center justify-center leading-none text-[#700070]">跨号</div>
            <div className={"col-span-2 border-b pr-[80px] " + hc}>侧面钢筋</div>
            {["箍筋", "肢数", "次梁宽度", "次梁加筋", "吊筋", "吊筋锚固", "箍筋加密长度", "腋长", "腋高", "加腋"].map((t) => (
              <div key={t} className={"row-span-2 " + hc}>{t}</div>
            ))}
            <div className={hc}>侧面原位标注筋</div>
            <div className={hc}>拉筋</div>
          </div>
          <div className={COLS + " h-[19px] bg-[#a6c9ec] border-b border-[#bbb] shrink-0"}>
            <div className="bg-[#f8d08c] border-r border-[#bbb] flex items-center justify-center text-[11px] leading-none text-[#700070] font-['Liberation_Sans',sans-serif]">1</div>
            <div className={"border-[3px] border-[#808080] relative flex items-center pl-px text-[11px] leading-none " + MONO}>1<span className="absolute -right-[3px] -bottom-[3px] w-[5px] h-[5px] bg-[#808080] border border-white" /></div>
            <div className="border-r-2 border-black" />
            <div className="border-r-2 border-black" />
            {row1.map((t, i) => <div key={i} className={dc}>{t}</div>)}
          </div>
          <div className={COLS + " h-[19px] border-b border-[#bbb] shrink-0"}>
            <div className="bg-[#f0f0f0] border-r border-[#bbb] flex items-center justify-center text-[11px] leading-none font-['Liberation_Sans',sans-serif]">2</div>
            <div className={"border-r-2 border-black flex items-center pl-[2px] text-[11px] leading-none " + MONO}>2</div>
            <div className="border-r border-[#bbb]" />
            <div className="border-r border-[#bbb]" />
            {row2.map((t, i) => <div key={i} className={dc}>{t}</div>)}
          </div>
          <div className="grow" />
          <div className="h-[16px] bg-[#f0f0f0] flex items-center shrink-0 pl-[4px] pr-[3px]">
            <Chev d="l" />
            <div className="ml-[466px] w-[326px] h-full bg-[#c8c8c8]" />
            <Chev d="r" className="ml-auto" />
          </div>
        </div>
      </div>
    </div>
  );
};

const props = ["KL29(2)", "楼层框架梁", "300", "550", "200", "2", " 中8@100/200(2)", "2", "2虫16", "2虫16", "", "", "", "", "", "", ""];
const labels = ["1", "2", "3", "4", "5", "6", "7", "8", "9", "10", "11", "12", "13", "14", "15", "23", "38"];

const RightPanel = () => (
  <div className="w-[127px] shrink-0 flex flex-col text-[12px] text-[#222] relative">
    <PanelHead title="属性编辑器" />
    <div className="mt-[3px] grow border border-[#aaa] bg-white overflow-hidden flex flex-col">
      <div className="flex h-[23px] border-b border-[#bbb] shrink-0">
        <div className="w-[21px] bg-[#f0f0f0] border-r border-[#bbb]" />
        <div className="grow bg-gradient-to-b from-[#f8d9a4] to-[#f2bd64] flex items-center justify-center leading-none text-[#700070]">属性值</div>
      </div>
      {props.map((p, i) => (
        <div key={i} className={"flex h-[19px] border-b border-[#bbb] shrink-0 " + (i === 0 ? "bg-[#e0effc]" : "")}>
          <div className={"w-[21px] border-r border-[#bbb] flex items-center justify-center text-[11px] leading-none font-['Liberation_Sans',sans-serif] " + (i === 0 ? "bg-[#f8d08c] text-[#700070]" : "bg-[#f0f0f0]")}>{labels[i]}</div>
          <div className={"grow flex items-center pl-[2px] text-[11px] leading-none whitespace-pre overflow-hidden tracking-[-0.8px] " + MONO + (i === 1 ? " !text-[12px] !tracking-normal" : "")}>{p}</div>
        </div>
      ))}
    </div>
    <div className="absolute right-0 top-[24px] w-[9px] h-[58px] bg-[#4a4f55] rounded-l-[3px] flex flex-col gap-[2px] pt-[16px] pl-[2px]">
      <i className="h-px w-[6px] bg-[#99aaaa]" /><i className="h-px w-[6px] bg-[#cccc88]" /><i className="h-px w-[6px] bg-[#cccc88]" /><i className="h-px w-[6px] bg-[#dddd88]" /><i className="h-px w-[6px] bg-[#dddd88]" /><i className="h-px w-[6px] bg-[#88cccc]" /><i className="h-px w-[6px] bg-[#88cccc]" /><i className="h-px w-[6px] bg-[#88cccc]" />
    </div>
  </div>
);

const Status = () => {
  const cell = "border-l border-t border-[#d8d8d8] h-full flex items-center whitespace-nowrap overflow-hidden leading-none pl-[2px] shrink-0 text-[11px] text-[#222] " + MONO;
  return (
    <div className="h-[18px] flex gap-[3px] bg-[#f0f0f0] shrink-0">
      <div className="w-[62px] h-full shrink-0 bg-[#fafafa]" />
      <div className={cell + " tracking-[-0.5px] w-[76px] ml-[1px]"}>层高:2.9m</div>
      <div className={cell + " tracking-[-0.5px] w-[96px]"}>底标高:-5.83m</div>
      <div className={cell + " tracking-[-0.5px] w-[47px]"}>1(1)</div>
      <div className={cell + " tracking-[0.7px] w-[913px]"}>按鼠标左键选择梁图元,按右键或ESC退出;可以通过回车键及shift+"→←↑"光标键在跨之间、上下输入框之间进行切换</div>
      <div className={cell + " tracking-[-0.5px] grow"}>150.5 FPS</div>
    </div>
  );
};

export default function App() {
  return (
    <div className={"w-[1279px] h-[690px] overflow-hidden bg-[#efefef] flex flex-col " + SANS}>
      <Menu />
      <Row1 />
      <div className="mt-[5px] h-[627px] flex shrink-0">
        <LeftPanel />
        <div className="w-[4px]" />
        <Col2 />
        <div className="w-[3px]" />
        <div className="w-[900px] shrink-0 flex flex-col">
          <Row2 /><Row3 /><Row4 /><Canvas /><Snap /><DataTable />
        </div>
        <div className="w-[3px]" />
        <RightPanel />
      </div>
      <Status />
    </div>
  );
}
